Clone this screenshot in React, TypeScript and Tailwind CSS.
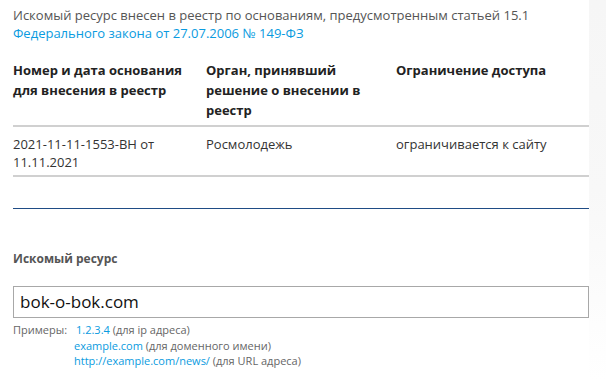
export default function App() {
  return (
    <div className="flex h-[380px] w-[606px] overflow-hidden bg-white font-['Open_Sans',sans-serif]">
      <div className="w-[589px] shrink-0 pl-[13px]">
        <p className="mt-[6px] text-[13px] leading-[18px] text-[#555]">
          Искомый ресурс внесен в реестр по основаниям, предусмотренным статьей 15.1
          <br />
          <a href="#" className="text-[#0a9be0]">
            Федерального закона от 27.07.2006 № 149-ФЗ
          </a>
        </p>

        <div className="mt-[18px] flex border-b-2 border-[#d0d0d0] pb-[5px] text-[13px] font-bold leading-[20px] text-[#222]">
          <div className="w-[193px] pr-3">Номер и дата основания для внесения в реестр</div>
          <div className="w-[190px] pr-3">Орган, принявший решение о внесении в реестр</div>
          <div className="flex-1">Ограничение доступа</div>
        </div>

        <div className="flex border-b-2 border-[#d0d0d0] pb-[4px] pt-[8px] text-[13px] leading-[18px] text-[#333]">
          <div className="w-[193px] pr-3">2021-11-11-1553-ВН от 11.11.2021</div>
          <div className="w-[190px] pr-3">Росмолодежь</div>
          <div className="flex-1">ограничивается к сайту</div>
        </div>

        <div className="mt-[31px] h-px bg-[#1f4c85]" />

        <div className="mt-[42px] text-[12px] font-bold leading-[16px] text-[#555]">Искомый ресурс</div>

        <div className="mt-[19px] flex h-[32px] items-center border border-[#a8a8a8] px-[6px] text-[17px] text-[#111]">
          bok-o-bok.com
        </div>

        <div className="mt-[4px] flex text-[11px] leading-[15.5px] text-[#666]">
          <div className="w-[61px]">Примеры:</div>
          <div>
            <div className="pl-[2px]">
              <span className="text-[#0a9be0]">1.2.3.4</span> (для ip адреса)
            </div>
            <div>
              <span className="text-[#0a9be0]">example.com</span> (для доменного имени)
            </div>
            <div>
              <span className="text-[#0a9be0]">http://example.com/news/</span> (для URL адреса)
            </div>
          </div>
        </div>
      </div>
      <div className="h-full flex-1 bg-gradient-to-b from-[#f6f6f6] via-[#f8f8f8] to-white" />
    </div>
  );
}
